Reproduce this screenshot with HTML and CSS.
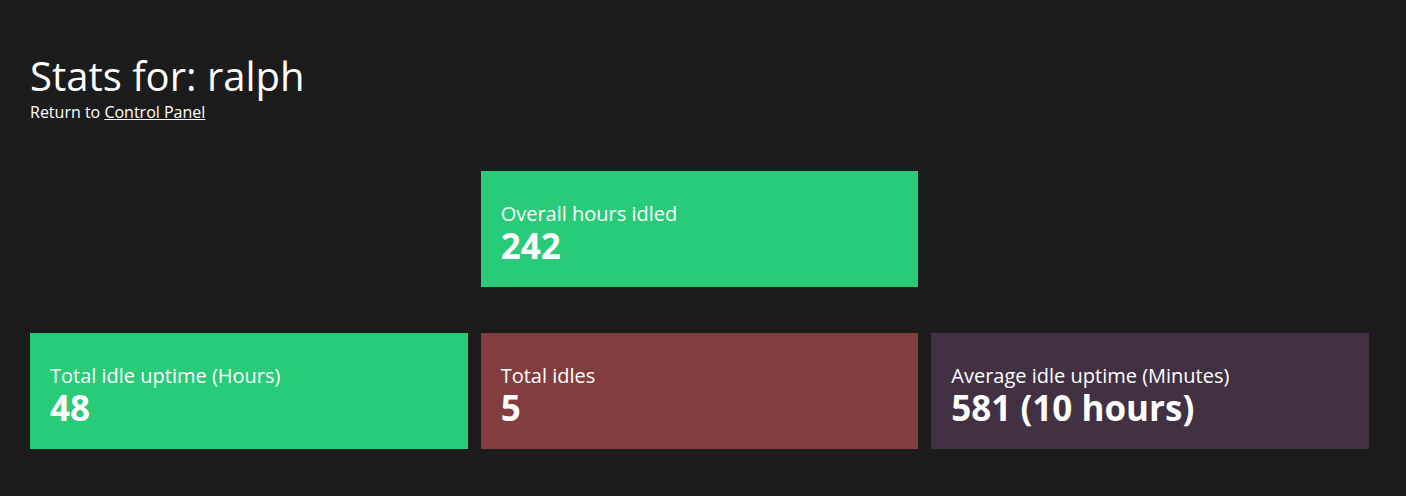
FILE: index.html
```html
<!DOCTYPE html>
<html lang="en">
<head>
<meta charset="utf-8">
<title>Stats for: ralph</title>
<link rel="stylesheet" href="styles.css">
</head>
<body>
<header class="header">
  <h1 class="title">Stats for: ralph</h1>
  <p class="back">Return to <a class="back-link" href="#">Control Panel</a></p>
</header>
<main class="grid">
  <section class="card card-green card-top">
    <div class="card-label">Overall hours idled</div>
    <div class="card-value">242</div>
  </section>
  <section class="card card-green card-bottom">
    <div class="card-label">Total idle uptime (Hours)</div>
    <div class="card-value">48</div>
  </section>
  <section class="card card-red card-bottom">
    <div class="card-label">Total idles</div>
    <div class="card-value">5</div>
  </section>
  <section class="card card-purple card-bottom">
    <div class="card-label">Average idle uptime (Minutes)</div>
    <div class="card-value">581 (10 hours)</div>
  </section>
</main>
</body>
</html>
```
FILE: styles.css
```css
html, body {
  margin: 0;
  padding: 0;
}
body {
  background: #1c1c1c;
  color: #ffffff;
  font-family: "Open Sans", "Noto Sans", sans-serif;
  padding: 52px 37px 0 30px;
}
.header {
  margin: 0;
}
.title {
  margin: 0;
  font-size: 40px;
  line-height: 48px;
  font-weight: 400;
}
.back {
  margin: 0;
  font-size: 16px;
  line-height: 24px;
}
.back-link {
  color: #ffffff;
  text-decoration: underline;
}
.grid {
  margin-top: 47px;
  display: grid;
  grid-template-columns: repeat(3, 1fr);
  column-gap: 13px;
  row-gap: 46px;
}
.card {
  height: 116px;
  box-sizing: border-box;
  padding: 10px 20px 0;
  display: flex;
  flex-direction: column;
  justify-content: center;
}
.card-top {
  grid-row: 1;
  grid-column: 2;
}
.card-bottom {
  grid-row: 2;
}
.card-green {
  background: #28cb77;
}
.card-red {
  background: #843d3e;
}
.card-purple {
  background: #423143;
}
.card-label {
  font-size: 20px;
  line-height: 24px;
}
.card-value {
  font-size: 35px;
  line-height: 40px;
  font-weight: 700;
}
```
